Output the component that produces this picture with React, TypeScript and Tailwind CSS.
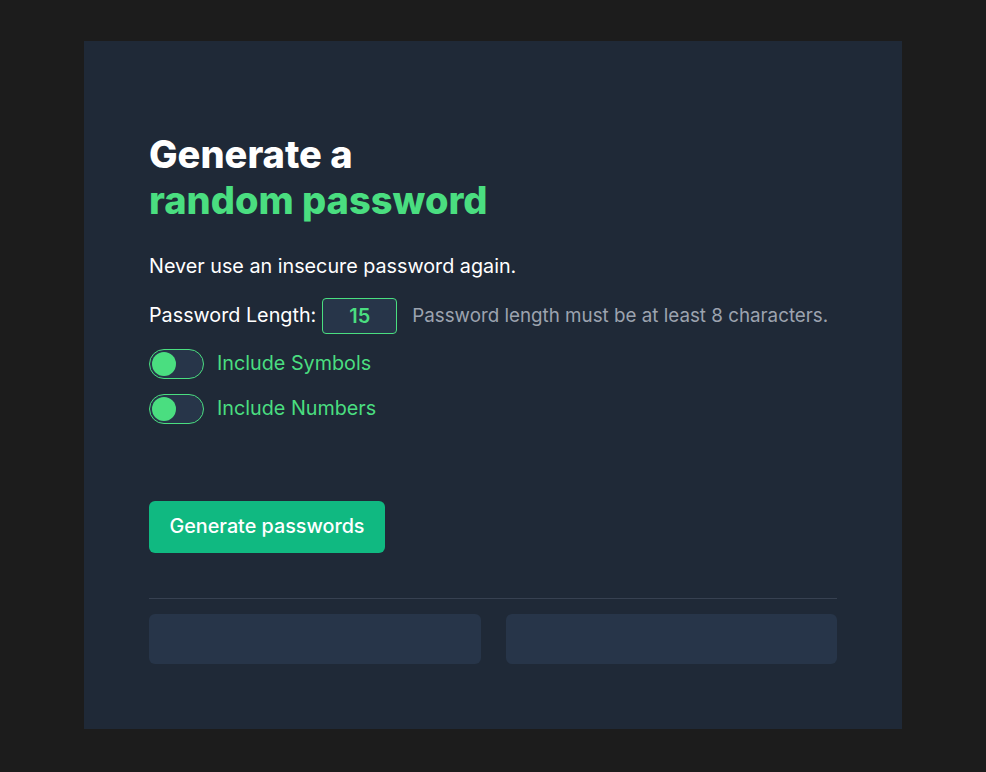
import { useState } from 'react';

function Toggle({ label, on, onChange }: { label: string; on: boolean; onChange: () => void }) {
  return (
    <label className="flex items-center gap-[13px] cursor-pointer">
      <button
        type="button"
        onClick={onChange}
        className="relative w-[55px] h-[30px] rounded-full border border-[#4ade80] bg-[#273549]"
      >
        <span
          className={`absolute top-[2px] w-[24px] h-[24px] rounded-full bg-[#4ade80] ${on ? 'left-[2px]' : 'left-[27px]'}`}
        />
      </button>
      <span className="text-[19.75px] text-[#4ade80]">{label}</span>
    </label>
  );
}

export default function App() {
  const [length, setLength] = useState('15');
  const [symbols, setSymbols] = useState(true);
  const [numbers, setNumbers] = useState(true);

  return (
    <div
      className="min-h-screen w-full bg-[#1c1c1c] flex justify-center pt-[41px]"
      style={{ fontFamily: 'Inter, "Noto Sans", sans-serif' }}
    >
      <div className="w-[818px] h-[688px] bg-[#1f2937] px-[65px] pt-[90px] flex flex-col">
        {/* Heading */}
        <h1 className="text-[38px] leading-[46px] font-extrabold text-white">
          Generate a
          <br />
          <span className="text-[#4ade80]">random password</span>
        </h1>

        <p className="mt-[29px] text-[19.75px] leading-[28px] text-white">Never use an insecure password again.</p>

        {/* Length */}
        <div className="mt-[18px] flex items-center">
          <span className="text-[19.75px] text-white">Password Length:</span>
          <input
            value={length}
            onChange={(e) => setLength(e.target.value)}
            className="ml-[6px] w-[75px] h-[36px] rounded-[4px] border border-[#4ade80] bg-[#273549] text-center text-[20px] font-semibold text-[#4ade80] outline-none"
          />
          <span className="ml-[15px] text-[18.8px] text-[#9ca3af]">Password length must be at least 8 characters.</span>
        </div>

        <div className="mt-[15px] flex flex-col gap-[15px]">
          <Toggle label="Include Symbols" on={symbols} onChange={() => setSymbols(!symbols)} />
          <Toggle label="Include Numbers" on={numbers} onChange={() => setNumbers(!numbers)} />
        </div>

        <div className="mt-[77px]">
          <button className="w-[236px] h-[52px] rounded-[6px] bg-[#10b981] text-white text-[19.75px] font-medium">
            Generate passwords
          </button>
        </div>

        <div className="mt-[45px] border-t border-[#374151]" />

        <div className="mt-[15px] grid grid-cols-2 gap-[25px]">
          <div className="h-[50px] rounded-[6px] bg-[#273549]" />
          <div className="h-[50px] rounded-[6px] bg-[#273549]" />
        </div>
      </div>
    </div>
  );
}
